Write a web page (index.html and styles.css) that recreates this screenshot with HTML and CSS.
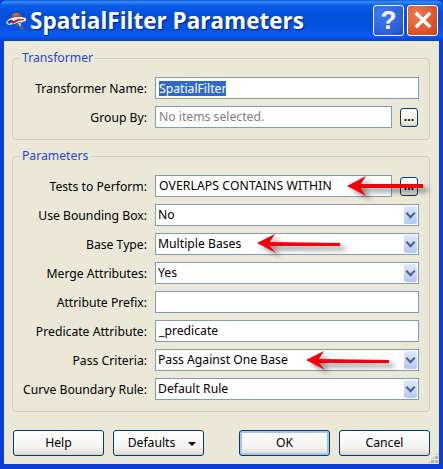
FILE: index.html
```html
<!DOCTYPE html>
<html lang="en">
<head>
	<meta charset="UTF-8">
	<title>SpatialFilter Parameters</title>
	<link rel="stylesheet" href="styles.css">
</head>
<body>
	<div class="window">
		<div class="titlebar">
			<svg class="app-icon" width="20" height="20" viewBox="0 0 20 20">
				<path d="M5 5 L6 3 L8 1 L13 1 L15 3 L16 6 L10 7 Z" fill="#c8402a"/>
				<path d="M7 2 L12 1 L13 3 L8 4 Z" fill="#9a8448"/>
				<path d="M0 10 L3 7 L9 5 L15 5 L20 6 L20 9 L16 10 L15 12 L8 12 L3 13 L1 12 Z" fill="#f0eef4"/>
				<path d="M1 10 L4 8 L7 8 L7 10 L3 12 Z" fill="#2a3fb0"/>
				<path d="M5 10 L12 7 L18 7 L18 8 L12 9 L7 12 Z" fill="#d0242c"/>
				<path d="M9 11 L15 10 L16 14 L18 17 L16 18 L13 15 L11 14 Z" fill="#5c6470"/>
				<path d="M12 11 L14 11 L15 14 L14 14 Z" fill="#e4e6ea"/>
			</svg>
			<div class="title">SpatialFilter Parameters</div>
			<div class="capbtn help">?</div>
			<div class="capbtn close">
				<svg width="22" height="22" viewBox="0 0 22 22"><path d="M5 5 L17 17 M17 5 L5 17" stroke="#fff" stroke-width="3.4" stroke-linecap="square"/></svg>
			</div>
		</div>
		<div class="client">
			<fieldset class="group first">
				<legend>Transformer</legend>
				<div class="row">
					<label>Transformer Name:</label>
					<div class="field"><span class="sel">SpatialFilter</span></div>
				</div>
				<div class="row">
					<label>Group By:</label>
					<div class="field short muted">No items selected.</div>
					<div class="dots">...</div>
				</div>
			</fieldset>
			<fieldset class="group second">
				<legend>Parameters</legend>
				<div class="row">
					<label>Tests to Perform:</label>
					<div class="field short wide-text">OVERLAPS CONTAINS WITHIN</div>
					<div class="dots">...</div>
				</div>
				<div class="row">
					<label>Use Bounding Box:</label>
					<div class="field combo">No<span class="drop"><i></i></span></div>
				</div>
				<div class="row">
					<label>Base Type:</label>
					<div class="field combo">Multiple Bases<span class="drop"><i></i></span></div>
				</div>
				<div class="row">
					<label>Merge Attributes:</label>
					<div class="field combo">Yes<span class="drop"><i></i></span></div>
				</div>
				<div class="row">
					<label>Attribute Prefix:</label>
					<div class="field"></div>
				</div>
				<div class="row">
					<label>Predicate Attribute:</label>
					<div class="field">_predicate</div>
				</div>
				<div class="row">
					<label>Pass Criteria:</label>
					<div class="field combo">Pass Against One Base<span class="drop"><i></i></span></div>
				</div>
				<div class="row">
					<label>Curve Boundary Rule:</label>
					<div class="field combo">Default Rule<span class="drop"><i></i></span></div>
				</div>
			</fieldset>
			<div class="buttons">
				<div class="btn">Help</div>
				<div class="btn defaults">Defaults<i class="caret"></i></div>
				<div class="spacer"></div>
				<div class="btn ok">OK</div>
				<div class="btn">Cancel</div>
			</div>
			<div class="grip"></div>
		</div>
		<!-- hand drawn arrows on top of the dialog -->
		<svg class="arrows" width="443" height="469" viewBox="0 0 443 469">
			<defs>
				<filter id="shade" x="-20%" y="-60%" width="140%" height="240%">
					<feDropShadow dx="5" dy="4" stdDeviation="2.5" flood-color="#000" flood-opacity="0.45"/>
				</filter>
			</defs>
			<g fill="#f40008" filter="url(#shade)">
				<path d="M347 186 L366 176 L361 184 L423 184 L423 188 L361 188 L366 196 Z"/>
				<path d="M257 243 L275 234 L270 242 L340 243 L340 246 L270 246 L276 253 Z"/>
				<path d="M306 360 L324 351 L319 359 L389 360 L389 363 L319 363 L325 370 Z"/>
			</g>
		</svg>
	</div>
</body>
</html>
```

FILE: styles.css
```css
html, body {
	margin: 0;
	padding: 0;
}

.window {
	position: relative;
	width: 443px;
	height: 469px;
	display: flex;
	flex-direction: column;
	background: #0a3fd8;
	font-family: "Noto Sans", sans-serif;
	font-size: 12.2px;
	color: #000;
	overflow: hidden;
}

.titlebar {
	height: 41px;
	flex: none;
	display: flex;
	align-items: center;
	box-sizing: border-box;
	padding: 0 5px 1px 6px;
	border-radius: 7px 7px 0 0;
	background: linear-gradient(to bottom, #0a5ae0 0, #3a8cf5 2px, #0b5fe8 5px, #0450dc 14px, #0552e2 28px, #0a5cf0 36px, #0640c8 41px);
}

.app-icon {
	flex: none;
	margin: 3px 4px 0 0;
}

.title {
	flex: 1;
	font-family: "Open Sans", sans-serif;
	font-size: 22.5px;
	font-weight: bold;
	color: #fff;
	text-shadow: 1px 1px 1px #0a1f7a;
	white-space: nowrap;
}

.capbtn {
	width: 31px;
	height: 31px;
	margin-left: 3px;
	box-sizing: border-box;
	border: 1px solid #fff;
	border-radius: 3px;
	display: flex;
	align-items: center;
	justify-content: center;
}

.help {
	background: radial-gradient(circle at 30% 30%, #3f7cf0, #2a5fd8 70%, #2048c0);
	color: #fff;
	font-size: 26px;
	font-weight: bold;
	font-family: "Liberation Sans", sans-serif;
}

.close {
	background: radial-gradient(circle at 30% 30%, #ec7a50, #e0562a 60%, #c4401c);
}

.client {
	position: relative;
	flex: 1;
	margin: 0 4px 5px 4px;
	padding: 0 8px;
	background: #ebe8d8;
	display: flex;
	flex-direction: column;
}

.group {
	margin: 0 1px 0 0;
	padding: 12px 10px 0 0;
	border: 1px solid #d0d0bf;
	border-radius: 4px;
	box-sizing: border-box;
	display: flex;
	flex-direction: column;
	gap: 7px;
}

.group.first {
	margin-top: 10px;
	height: 89px;
}

.group.second {
	margin-top: 9px;
	height: 263px;
}

legend {
	margin-left: 7px;
	padding: 0 2px;
	color: #2a47c8;
	line-height: 14px;
}

.row {
	display: flex;
	align-items: center;
	height: 22px;
}

.row label {
	width: 134px;
	flex: none;
	text-align: right;
	margin-right: 8px;
	white-space: nowrap;
}

.field {
	flex: none;
	width: 264px;
	height: 22px;
	box-sizing: border-box;
	border: 1px solid #7f9db9;
	background: #fff;
	padding-left: 3px;
	line-height: 20px;
	white-space: nowrap;
	display: flex;
	align-items: center;
}

.field.short {
	width: 237px;
}

.wide-text {
	letter-spacing: 0.1px;
}

.muted {
	color: #808080;
}

.sel {
	background: #316ac5;
	color: #fff;
	line-height: 15px;
}

.dots {
	flex: none;
	width: 18px;
	height: 19px;
	margin-left: 8px;
	box-sizing: border-box;
	border: 1px solid #003c74;
	border-radius: 3px;
	background: linear-gradient(to bottom, #fff, #ece9d8 85%, #d6d0c0);
	font-weight: bold;
	text-align: center;
	line-height: 15px;
}

.combo {
	position: relative;
	padding-left: 2px;
}

.drop {
	position: absolute;
	top: 1px;
	right: 1px;
	width: 13px;
	height: 18px;
	border-radius: 2px;
	background: linear-gradient(to bottom, #dfe8fb, #b4c8f4);
	display: flex;
	align-items: center;
	justify-content: center;
}

.drop i {
	width: 5px;
	height: 5px;
	margin-top: -3px;
	border-right: 2px solid #4d6185;
	border-bottom: 2px solid #4d6185;
	transform: rotate(45deg);
}

.buttons {
	display: flex;
	gap: 9px;
	margin-top: 18px;
	padding: 0 1px;
}

.spacer {
	width: 17px;
	flex: none;
}

.btn {
	position: relative;
	flex: none;
	width: 91px;
	height: 26px;
	box-sizing: border-box;
	border: 1px solid #003c74;
	border-radius: 3px;
	background: linear-gradient(to bottom, #fff, #f4f3ee 70%, #dcd8cb);
	text-align: center;
	line-height: 24px;
}

.defaults {
	padding-right: 14px;
}

.caret {
	position: absolute;
	right: 7px;
	top: 11px;
	border-left: 4px solid transparent;
	border-right: 4px solid transparent;
	border-top: 4px solid #000;
}

.ok {
	box-shadow: inset 0 0 0 2px #a9c4ec;
}

.grip {
	position: absolute;
	right: 0;
	bottom: 0;
	width: 12px;
	height: 12px;
	background: radial-gradient(circle at 1.5px 1.5px, #b8b5a4 1.5px, transparent 1.6px) 0 0 / 4px 4px;
	clip-path: polygon(100% 0, 100% 100%, 0 100%);
}

.arrows {
	position: absolute;
	left: 0;
	top: 0;
	pointer-events: none;
}
```
